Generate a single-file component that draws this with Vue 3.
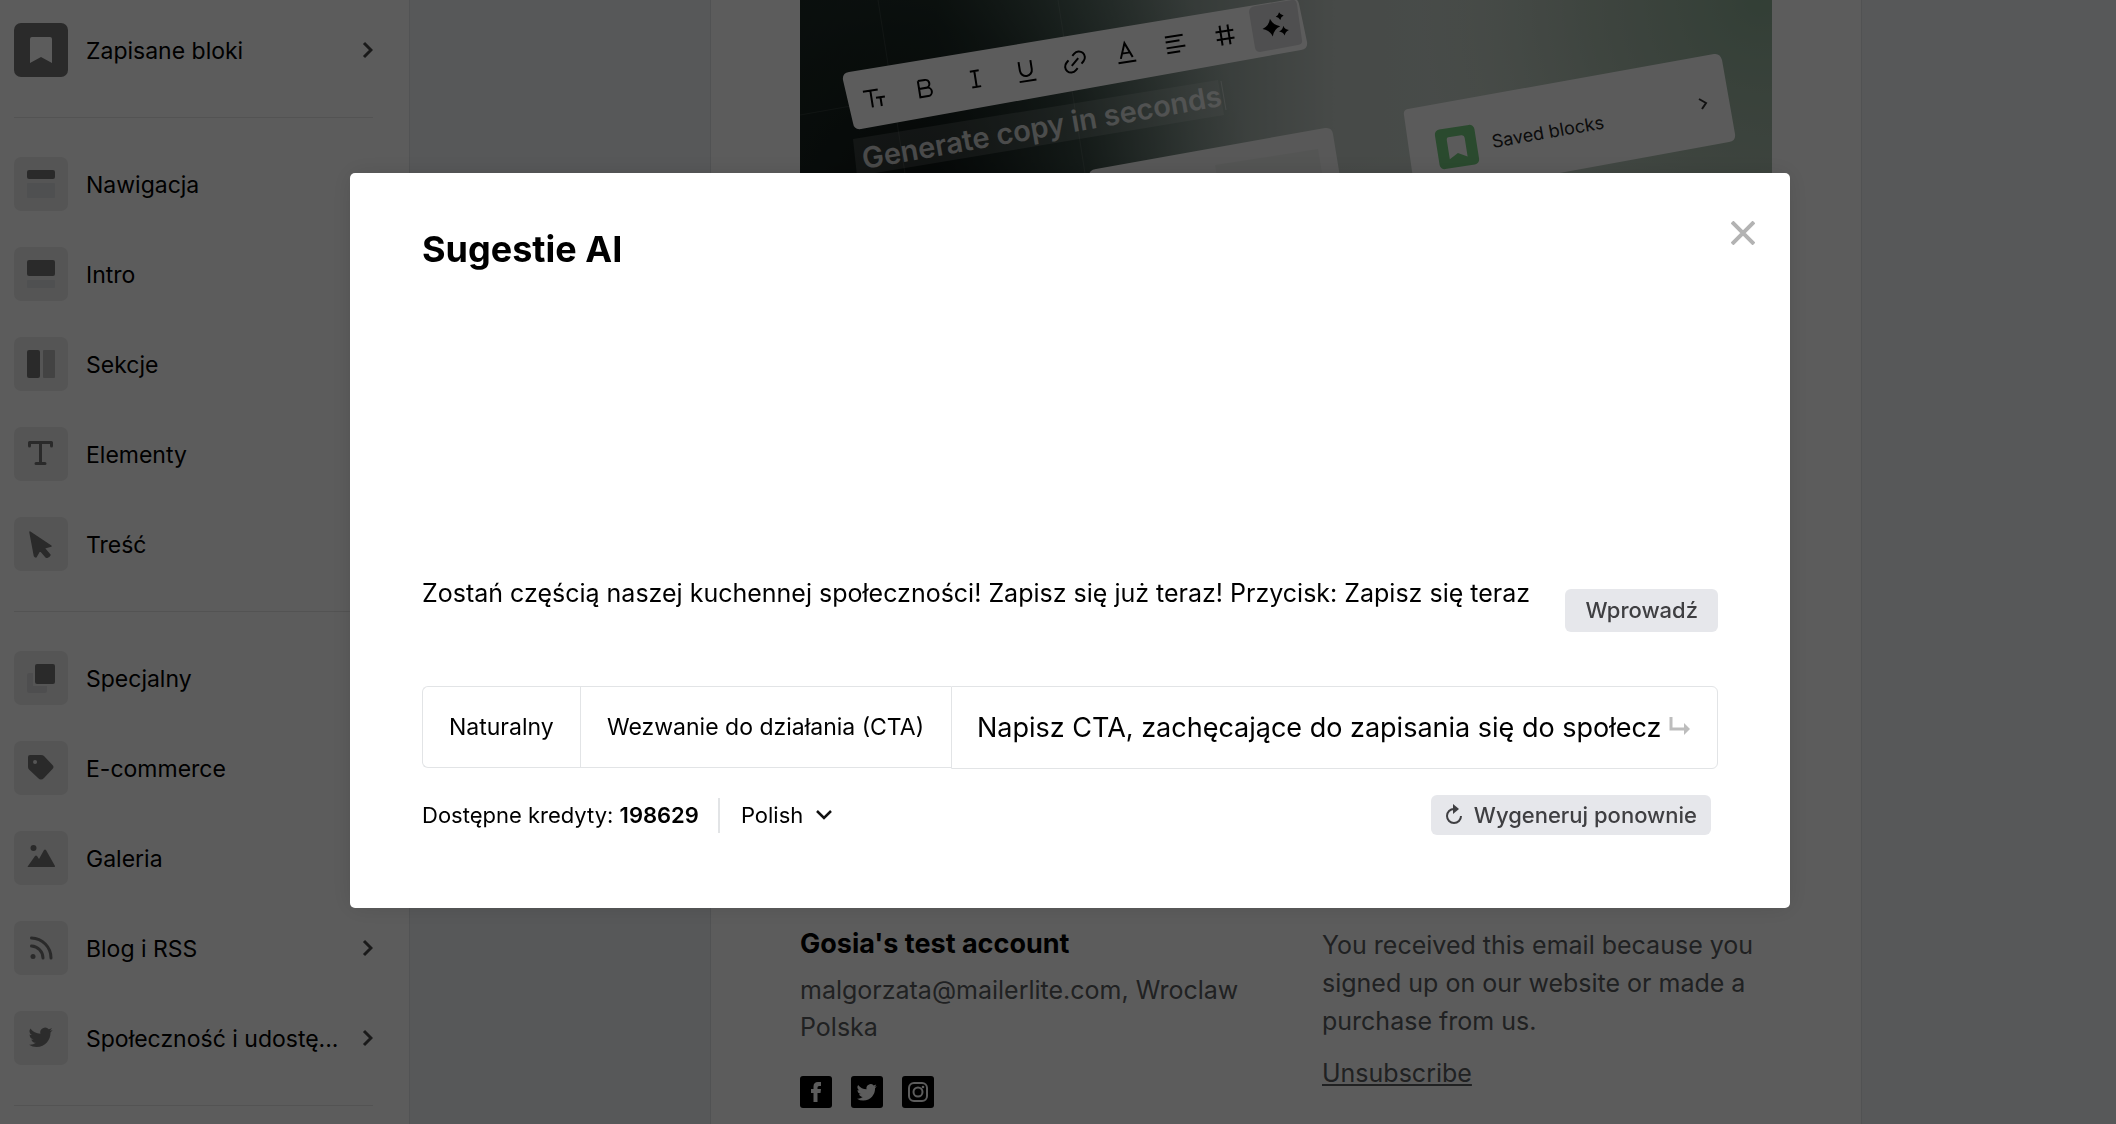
<script setup>
import { ref } from 'vue'

// sidebar block groups, separated by a thin line
const groups = [
  [{ icon: 'bookmark', label: 'Zapisane bloki', arrow: true, dark: true }],
  [
    { icon: 'navigation', label: 'Nawigacja' },
    { icon: 'intro', label: 'Intro' },
    { icon: 'sections', label: 'Sekcje' },
    { icon: 'elements', label: 'Elementy' },
    { icon: 'content', label: 'Treść' },
  ],
  [
    { icon: 'special', label: 'Specjalny' },
    { icon: 'tag', label: 'E-commerce' },
    { icon: 'gallery', label: 'Galeria' },
    { icon: 'rss', label: 'Blog i RSS', arrow: true },
    { icon: 'twitter', label: 'Społeczność i udostę...', arrow: true },
  ],
]

const birdPath = 'M23.6 4.9a9.7 9.7 0 0 1-2.8.8 4.9 4.9 0 0 0 2.1-2.7 9.8 9.8 0 0 1-3.1 1.2 4.9 4.9 0 0 0-8.4 4.5A13.9 13.9 0 0 1 1.3 3.5a4.9 4.9 0 0 0 1.5 6.5 4.9 4.9 0 0 1-2.2-.6v.1a4.9 4.9 0 0 0 3.9 4.8 4.9 4.9 0 0 1-2.2.1 4.9 4.9 0 0 0 4.6 3.4A9.9 9.9 0 0 1 0 19.8a13.9 13.9 0 0 0 7.5 2.2c9.1 0 14-7.5 14-14v-.6a10 10 0 0 0 2.1-2.5z'

const prompt = ref('Napisz CTA, zachęcające do zapisania się do społecz')
const tone = ref('Naturalny')
const kind = ref('Wezwanie do działania (CTA)')
const language = ref('Polish')
const credits = ref(198629)
</script>

<template>
  <div class="editor">
    <aside class="sidebar">
      <ul v-for="(group, i) in groups" :key="i" class="group">
        <li v-for="item in group" :key="item.label">
          <button type="button" class="block">
            <span class="tile" :class="{ dark: item.dark }">
              <svg width="28" height="28" viewBox="0 0 28 28">
                <path v-if="item.icon === 'bookmark'" fill="#fff" d="M5 1h18q2 0 2 2v24l-11-6-11 6V3q0-2 2-2z" />
                <g v-else-if="item.icon === 'navigation'">
                  <rect width="28" height="9" rx="2" fill="#757575" />
                  <rect y="13" width="28" height="15" rx="1" fill="#dadddf" />
                </g>
                <g v-else-if="item.icon === 'intro'">
                  <rect width="28" height="16" rx="2" fill="#757575" />
                  <rect y="20" width="28" height="8" rx="1" fill="#dadddf" />
                </g>
                <g v-else-if="item.icon === 'sections'">
                  <rect width="13" height="28" rx="2" fill="#757575" />
                  <rect x="16" width="12" height="28" rx="1" fill="#b9b9b9" />
                </g>
                <path v-else-if="item.icon === 'elements'" fill="none" stroke="#757575" stroke-width="3" stroke-linecap="round" stroke-linejoin="round" d="M2.500 6V2.500h22V6M13.500 2.500v21M9 23.500h9" />
                <path v-else-if="item.icon === 'content'" fill="#757575" stroke="#757575" stroke-width="1.500" stroke-linejoin="round" d="M3 2l21 14-7 2 6 7q-1.500 3-4 2l-6-7-4 7q-1 0-1.500-1z" />
                <g v-else-if="item.icon === 'special'">
                  <path fill="#d9d9db" d="M2 9h4v13h14v5q0 2-2 2H2q-2 0-2-2V11q0-2 2-2z" />
                  <rect x="8" width="20" height="20" rx="2" fill="#757575" />
                </g>
                <path v-else-if="item.icon === 'tag'" fill="#757575" fill-rule="evenodd" d="M3 1h11q2 0 3 1l8.500 9q2 2 0 4L17 24q-3 3-6 0L2.500 16Q1 15 1 13V3q0-2 2-2zm5 5a2 2 0 1 0 .1 4A2 2 0 0 0 8 6z" />
                <g v-else-if="item.icon === 'gallery'" fill="#757575">
                  <circle cx="6.500" cy="4" r="3" />
                  <path d="M1 22l7-10q1-1 2 0l2 3 5-9q1-1 2 0l9 16q.500 1-1 1H1q-1 0 0-1z" />
                </g>
                <g v-else-if="item.icon === 'rss'" fill="none" stroke="#757575" stroke-width="3" stroke-linecap="round">
                  <circle cx="6" cy="22.500" r="2.500" fill="#757575" stroke="none" />
                  <path d="M4.500 12A12 12 0 0 1 16 24M4.500 4A20 20 0 0 1 24 24" />
                </g>
                <g v-else fill="#7a7a7a" transform="translate(2 1)">
                  <path :d="birdPath" />
                </g>
              </svg>
            </span>
            <span class="label">{{ item.label }}</span>
            <svg v-if="item.arrow" class="arrow" width="11" height="18" viewBox="0 0 11 18">
              <path fill="none" stroke="#4a4a4a" stroke-width="3" d="M2 2l7 7-7 7" />
            </svg>
          </button>
        </li>
      </ul>
    </aside>

    <main class="canvas">
      <article class="email">
        <svg class="hero" viewBox="0 0 972 840">
          <defs>
            <linearGradient id="bg" x1="0" y1="0" x2="1" y2="0">
              <stop offset="0" stop-color="#141d1a" />
              <stop offset="0.14" stop-color="#1c2824" />
              <stop offset="0.28" stop-color="#5c7068" />
              <stop offset="0.4" stop-color="#93a29b" />
              <stop offset="0.55" stop-color="#c4ccc7" />
              <stop offset="0.7" stop-color="#c8d2ca" />
              <stop offset="1" stop-color="#b4c4b8" />
            </linearGradient>
            <radialGradient id="shade" gradientUnits="userSpaceOnUse" cx="120" cy="190" r="330">
              <stop offset="0" stop-color="#0c1110" stop-opacity="0.9" />
              <stop offset="0.5" stop-color="#1c2b26" stop-opacity="0.6" />
              <stop offset="1" stop-color="#4c665c" stop-opacity="0" />
            </radialGradient>
            <radialGradient id="green" gradientUnits="userSpaceOnUse" cx="960" cy="0" r="340">
              <stop offset="0" stop-color="#8cae95" />
              <stop offset="0.5" stop-color="#a0b5a3" stop-opacity="0.6" />
              <stop offset="1" stop-color="#b4c4b8" stop-opacity="0" />
            </radialGradient>
          </defs>
          <rect width="972" height="840" fill="url(#bg)" />
          <rect width="972" height="840" fill="url(#shade)" />
          <rect width="972" height="840" fill="url(#green)" />
          <g fill="none" stroke="#fff" stroke-opacity="0.1">
            <path d="M78 0l28 180M258 0l28 180M0 115l500-88" />
          </g>

          <!-- formatting toolbar -->
          <path fill="#fff" d="M49 72L492-1Q498-2 499 4L507 42Q508 49 501 50L61 129Q54 130 53 123L43 80Q42 73 49 72z" />
          <path fill="#dcdcde" d="M455 6L492 0Q496-1 497 4L502 40Q503 44 498 45L460 52Q456 52 455 48L449 12Q449 7 455 6z" />
          <g fill="none" stroke="#000" stroke-width="2">
            <g transform="translate(75 98) rotate(-9)"><path d="M-11-8H4M-3.500-8V9M1 0h9M5.500 0v9" /></g>
            <g transform="translate(125 88) rotate(-9)"><path d="M-6-8H1a4 4 0 0 1 0 8H-6M-6 0H2a4 4 0 0 1 0 8.500H-6zM-6-8V8" /></g>
            <g transform="translate(175 79) rotate(-9)"><path d="M-4-8H5M-4 8H5M.500-8V8" /></g>
            <g transform="translate(226 71) rotate(-9)"><path d="M-6-10V-1a6 6 0 0 0 12 0V-10M-8 10H9" /></g>
            <g transform="translate(275 62) rotate(-50)"><path d="M-3-6H-6a6 6 0 0 0 0 12H-3M3-6H6a6 6 0 0 1 0 12H3M-5 0H5" /></g>
            <g transform="translate(326 53) rotate(-9)"><path d="M-6 5L0-10 6 5M-4 0H4M-9 9H9" /></g>
            <g transform="translate(375 44) rotate(-9)"><path d="M-9-8H9M-9-3H5M-9 3H10M-9 8H4" /></g>
            <g transform="translate(425 35) rotate(-9)"><path d="M-4-10V10M4-10V10M-9-4H9M-9 4H9" /></g>
          </g>
          <g transform="translate(475 25) rotate(-9)">
            <path d="M-4-7Q-2 0 5 2-2 4-4 11-6 4-13 2-6 0-4-7zM6-12Q7-9 10-8 7-7 6-4 5-7 2-8 5-9 6-12zM8 2Q9 6 13 7 9 8 8 12 7 8 3 7 7 6 8 2z" />
          </g>

          <path fill="#fff" fill-opacity="0.14" d="M53 139L418 80 424 115 57 176z" />
          <path stroke="#fff" stroke-opacity="0.4" d="M421 81l5 29" />
          <text class="hero-title" transform="translate(64 169) rotate(-10)">Generate copy in seconds</text>

          <path fill="#f3f4f3" d="M296 169L525 128Q532 127 533 134L560 300H310L289 178Q288 170 296 169z" />
          <path fill="#e9eae9" d="M415 165L518 149 530 220H424z" />

          <!-- saved blocks card -->
          <path fill="#fcfcfc" d="M608 109L914 54Q920 53 922 60L935 134Q936 141 929 142L622 198Q616 199 615 192L604 115Q603 110 608 109z" />
          <g transform="translate(657 147) rotate(-9)">
            <rect x="-20" y="-20" width="40" height="40" rx="5" fill="#76cc80" />
            <path fill="#fcfcfc" d="M-7-11H6q3 0 3 3V11L0 6-9 11V-8q0-3 2-3z" />
          </g>
          <text class="hero-card" transform="translate(693 148) rotate(-10)">Saved blocks</text>
          <path fill="none" stroke="#333" stroke-width="2" d="M899 99l7 4-4 6" />
        </svg>

        <div class="email-footer">
          <section>
            <h2>Gosia's test account</h2>
            <p class="address">malgorzata@mailerlite.com, Wroclaw<br>Polska</p>
            <div class="socials">
              <a href="#" aria-label="Facebook">
                <svg width="32" height="32" viewBox="0 0 32 32">
                  <path fill="#fff" d="M13.500 26V17H11v-4h2.500v-2.500Q13.500 6 18 6h3v4h-2q-1.500 0-1.500 1.500V13H21l-.500 4h-3v9z" />
                </svg>
              </a>
              <a href="#" aria-label="Twitter">
                <svg width="32" height="32" viewBox="0 0 32 32">
                  <g fill="#fff" transform="translate(6 6) scale(.84)"><path :d="birdPath" /></g>
                </svg>
              </a>
              <a href="#" aria-label="Instagram">
                <svg width="32" height="32" viewBox="0 0 32 32">
                  <g fill="none" stroke="#fff" stroke-width="2">
                    <rect x="7" y="7" width="18" height="18" rx="5" />
                    <circle cx="16" cy="16" r="4.500" />
                  </g>
                  <circle cx="21" cy="11" r="1.300" fill="#fff" />
                </svg>
              </a>
            </div>
          </section>
          <section>
            <p class="notice">You received this email because you signed up on our website or made a purchase from us.</p>
            <a class="unsubscribe" href="#">Unsubscribe</a>
          </section>
        </div>
      </article>
    </main>

    <div class="overlay">
      <div class="modal" role="dialog" aria-modal="true" aria-labelledby="modal-title">
        <button type="button" class="close" aria-label="Zamknij">
          <svg width="24" height="24" viewBox="0 0 24 24">
            <path fill="none" stroke="#b3b3b3" stroke-width="4" d="M1 1l22 22M23 1L1 23" />
          </svg>
        </button>
        <h1 id="modal-title">Sugestie AI</h1>

        <div class="results">
          <div class="result">
            <p>Zostań częścią naszej kuchennej społeczności! Zapisz się już teraz! Przycisk: Zapisz się teraz</p>
            <button type="button" class="btn insert">Wprowadź</button>
          </div>
        </div>

        <div class="prompt-bar">
          <select v-model="tone" class="segment first" aria-label="Ton">
            <option>Naturalny</option>
          </select>
          <select v-model="kind" class="segment" aria-label="Rodzaj treści">
            <option>Wezwanie do działania (CTA)</option>
          </select>
          <div class="prompt">
            <input v-model="prompt" type="text" aria-label="Opis">
            <svg width="22" height="22" viewBox="0 0 22 22">
              <path fill="none" stroke="#bdbdbd" stroke-width="3" d="M2 0v12h14" />
              <path fill="#bdbdbd" d="M15 6l6 6-6 6z" />
            </svg>
          </div>
        </div>

        <div class="actions">
          <span class="credits">Dostępne kredyty: <b>{{ credits }}</b></span>
          <span class="language">
            <select v-model="language" aria-label="Język">
              <option>Polish</option>
            </select>
            <svg width="16" height="10" viewBox="0 0 16 10">
              <path fill="none" stroke="#111" stroke-width="2.500" d="M1 1l7 7 7-7" />
            </svg>
          </span>
          <button type="button" class="btn regenerate">
            <svg width="18" height="22" viewBox="0 0 18 22">
              <path fill="none" stroke="#3f3f42" stroke-width="2" d="M9 5a7 7 0 1 0 7 7" />
              <path fill="#3f3f42" d="M8 0l6 5-6 5z" />
            </svg>
            Wygeneruj ponownie
          </button>
        </div>
      </div>
    </div>
  </div>
</template>

<style>
body {
  margin: 0;
}
</style>

<style scoped>
.editor {
  display: flex;
  height: 100vh;
  overflow: hidden;
  font-family: Inter, 'Liberation Sans', sans-serif;
  color: #000;
}

.editor *,
.editor *::before {
  box-sizing: border-box;
}

button,
input,
select {
  font-family: inherit;
  color: inherit;
}

h1,
h2,
p,
ul {
  margin: 0;
  padding: 0;
}

/* sidebar */
.sidebar {
  flex: 0 0 410px;
  padding: 0 36px 0 14px;
  background: #fff;
  border-right: 1px solid #e3e5e8;
  overflow: hidden;
}

.group {
  list-style: none;
  padding: 21px 0 22px;
  border-bottom: 1px solid #e6e6e6;
}

.group:first-child {
  padding-top: 5px;
}

.block {
  display: flex;
  align-items: center;
  gap: 18px;
  width: 100%;
  height: 90px;
  padding: 0;
  border: 0;
  background: none;
  text-align: left;
}

.tile {
  display: flex;
  align-items: center;
  justify-content: center;
  flex: 0 0 54px;
  height: 54px;
  border-radius: 7px;
  background: #ebebeb;
}

.tile svg {
  overflow: visible;
}

.tile.dark {
  background: #757575;
}

.label {
  flex: 1;
  padding-top: 2px;
  font-size: 23px;
  line-height: 30px;
  white-space: nowrap;
}

.arrow {
  flex: none;
}

/* email preview */
.canvas {
  flex: 1;
  min-width: 0;
  padding: 0 254px 0 300px;
  background: #f0f3f6;
}

.email {
  min-height: 100%;
  padding: 0 89px;
  background: #fff;
  border: solid #e0e3e6;
  border-width: 0 1px;
}

.hero {
  display: block;
  width: 100%;
}

.hero-title {
  font-size: 29px;
  font-weight: 600;
  fill: #fff;
  fill-opacity: 0.75;
}

.hero-card {
  font-size: 18px;
  fill: #222;
}

.email-footer {
  display: grid;
  grid-template-columns: 1fr 1fr;
  gap: 72px;
  padding-top: 85px;
  font-size: 25px;
  line-height: 38px;
  color: #595c5e;
}

.email-footer h2 {
  font-size: 27px;
  line-height: 38px;
  color: #000;
}

.address {
  margin: 9px 0 30px;
  line-height: 37px;
}

.socials {
  display: flex;
  gap: 19px;
}

.socials a {
  width: 32px;
  height: 32px;
  border-radius: 3px;
  background: #000;
}

.notice {
  margin: 1px 0 14px;
}

.unsubscribe {
  color: inherit;
}

/* dialog */
.overlay {
  position: fixed;
  inset: 0;
  display: flex;
  justify-content: center;
  align-items: flex-start;
  padding: 173px 0 0 24px;
  background: rgba(0, 0, 0, 0.64);
}

.modal {
  position: relative;
  width: 100%;
  max-width: 1440px;
  padding: 54px 72px 73px;
  border-radius: 5px;
  background: #fff;
  box-shadow: 0 0 24px rgba(0, 0, 0, 0.12);
}

.close {
  position: absolute;
  top: 48px;
  right: 35px;
  width: 24px;
  height: 24px;
  padding: 0;
  border: 0;
  background: none;
}

.close svg {
  display: block;
}

h1 {
  font-size: 36px;
  line-height: 44px;
}

.results {
  display: flex;
  flex-direction: column;
  justify-content: flex-end;
  min-height: 361px;
}

.result {
  display: flex;
  justify-content: space-between;
  gap: 24px;
}

.result p {
  font-size: 25px;
  line-height: 38px;
}

.btn {
  border: 0;
  border-radius: 6px;
  background: #e6e7eb;
  color: #3f3f42;
  font-size: 22px;
  font-weight: 500;
  line-height: 28px;
  white-space: nowrap;
}

.insert {
  flex: none;
  margin-top: 15px;
  padding: 7px 20px 8px;
}

.prompt-bar {
  display: flex;
  align-items: flex-start;
  margin-top: 54px;
}

.segment {
  flex: none;
  appearance: none;
  height: 82px;
  padding: 0 26px;
  border: 1px solid #e2e4e6;
  border-right: 0;
  border-radius: 0;
  background: #fff;
  font-size: 23px;
}

.segment.first {
  border-radius: 6px 0 0 6px;
}

.prompt {
  display: flex;
  align-items: center;
  flex: 1;
  min-width: 0;
  height: 83px;
  padding: 0 26px 0 25px;
  border: 1px solid #e2e4e6;
  border-radius: 0 6px 6px 0;
}

.prompt input {
  flex: 1;
  min-width: 0;
  margin-right: 8px;
  padding: 0;
  border: 0;
  outline: 0;
  background: none;
  font-size: 27px;
  line-height: 40px;
}

.actions {
  display: flex;
  align-items: center;
  margin-top: 26px;
  padding-right: 7px;
  font-size: 22px;
}

.language {
  display: flex;
  align-items: center;
  gap: 12px;
  height: 35px;
  margin-left: 19px;
  padding-left: 21px;
  border-left: 2px solid #e2e4e6;
}

.language select {
  appearance: none;
  padding: 0;
  border: 0;
  background: none;
  font-size: 22px;
}

.regenerate {
  display: flex;
  align-items: center;
  gap: 11px;
  margin-left: auto;
  padding: 6px 14px;
}

.credits b {
  font-weight: 600;
}
</style>
